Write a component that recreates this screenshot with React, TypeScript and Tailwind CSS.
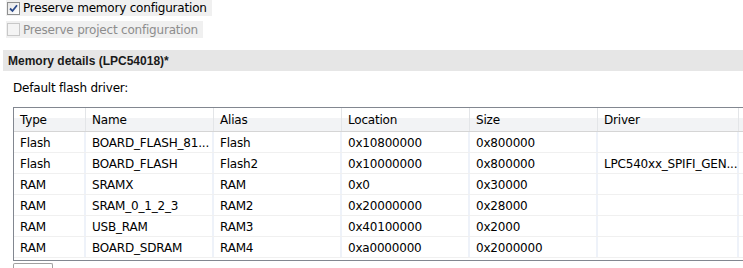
import React from 'react'

const cols = [
  { label: 'Type', w: 'w-[72px]' },
  { label: 'Name', w: 'w-[128px]' },
  { label: 'Alias', w: 'w-[128px]' },
  { label: 'Location', w: 'w-[128px]' },
  { label: 'Size', w: 'w-[128px]' },
  { label: 'Driver', w: 'w-[141px]' },
]

const rows = [
  ['Flash', 'BOARD_FLASH_81...', 'Flash', '0x10800000', '0x800000', ''],
  ['Flash', 'BOARD_FLASH', 'Flash2', '0x10000000', '0x800000', 'LPC540xx_SPIFI_GEN...'],
  ['RAM', 'SRAMX', 'RAM', '0x0', '0x30000', ''],
  ['RAM', 'SRAM_0_1_2_3', 'RAM2', '0x20000000', '0x28000', ''],
  ['RAM', 'USB_RAM', 'RAM3', '0x40100000', '0x2000', ''],
  ['RAM', 'BOARD_SDRAM', 'RAM4', '0xa0000000', '0x2000000', ''],
]

function Check({ checked, disabled }: { checked?: boolean; disabled?: boolean }) {
  return (
    <span
      className={`w-[13px] h-[13px] border flex items-center justify-center shrink-0 ${
        disabled ? 'border-[#c8c8c8] bg-[#f4f4f4]' : 'border-[#8e8f8f] bg-[linear-gradient(135deg,#e6e6e6,#ffffff)]'
      }`}
    >
      {checked && (
        <svg width="9" height="9" viewBox="0 0 9 9">
          <path d="M1 4.5 L3.5 7 L8 1.2" fill="none" stroke="#2b4a8a" strokeWidth="1.8" />
        </svg>
      )}
    </span>
  )
}

export default function App() {
  return (
    <div className="w-[743px] h-[268px] bg-white overflow-hidden text-[12px] tracking-[-0.2px] text-black font-['DejaVu_Sans',sans-serif]">
      {/* Options */}
      <div className="flex flex-col items-start gap-[5px] pl-[6px]">
        <label className="flex items-center gap-[2px] h-[16px] bg-[#f0f0f0] pr-[5px] pl-[1px]">
          <Check checked />
          <span className="ml-[1px]">Preserve memory configuration</span>
        </label>
        <label className="flex items-center gap-[2px] h-[17px] bg-[#f0f0f0] pr-[5px] pl-[1px] text-[#8d8d8d]">
          <Check disabled />
          <span className="ml-[1px]">Preserve project configuration</span>
        </label>
      </div>

      {/* Section header */}
      <div className="mt-[12px] ml-[3px] h-[21px] bg-[#e6e6e6] flex items-center pl-[5px] font-bold tracking-normal text-[12px] font-['Liberation_Sans',sans-serif] text-[#1a1a1a]">
        Memory details (LPC54018)*
      </div>

      <div className="mt-[11px] ml-[13px] h-[13px] leading-[13px]">Default flash driver:</div>

      {/* Table */}
      <div className="mt-[12px] ml-[13px] w-[740px] h-[154px] border border-[#828790] overflow-hidden">
        <div className="flex h-[24px] border-b border-[#d5d5d5] bg-[linear-gradient(#ffffff_0,#ffffff_45%,#f2f3f5_45%,#f2f3f5_100%)]">
          {cols.map((c) => (
            <div key={c.label} className={`${c.w} shrink-0 border-r border-[#e3e5e8] pl-[6px] pt-[1px] flex items-center`}>
              {c.label}
            </div>
          ))}
          <div className="flex-1" />
        </div>
        {rows.map((r, i) => (
          <div key={i} className="flex h-[21px] border-b border-[#f0f0f0]">
            {r.map((v, j) => (
              <div key={j} className={`${cols[j].w} shrink-0 border-r-2 border-[#eef2f9] pl-[6px] pt-[1px] flex items-center whitespace-nowrap`}>
                {v}
              </div>
            ))}
            <div className="flex-1" />
          </div>
        ))}
      </div>

      {/* Button top edge */}
      <div className="mt-[2px] ml-[13px] w-[40px] h-[8px] border-t border-l border-r border-[#a0a0a0] rounded-t-[2px]" />
    </div>
  )
}
